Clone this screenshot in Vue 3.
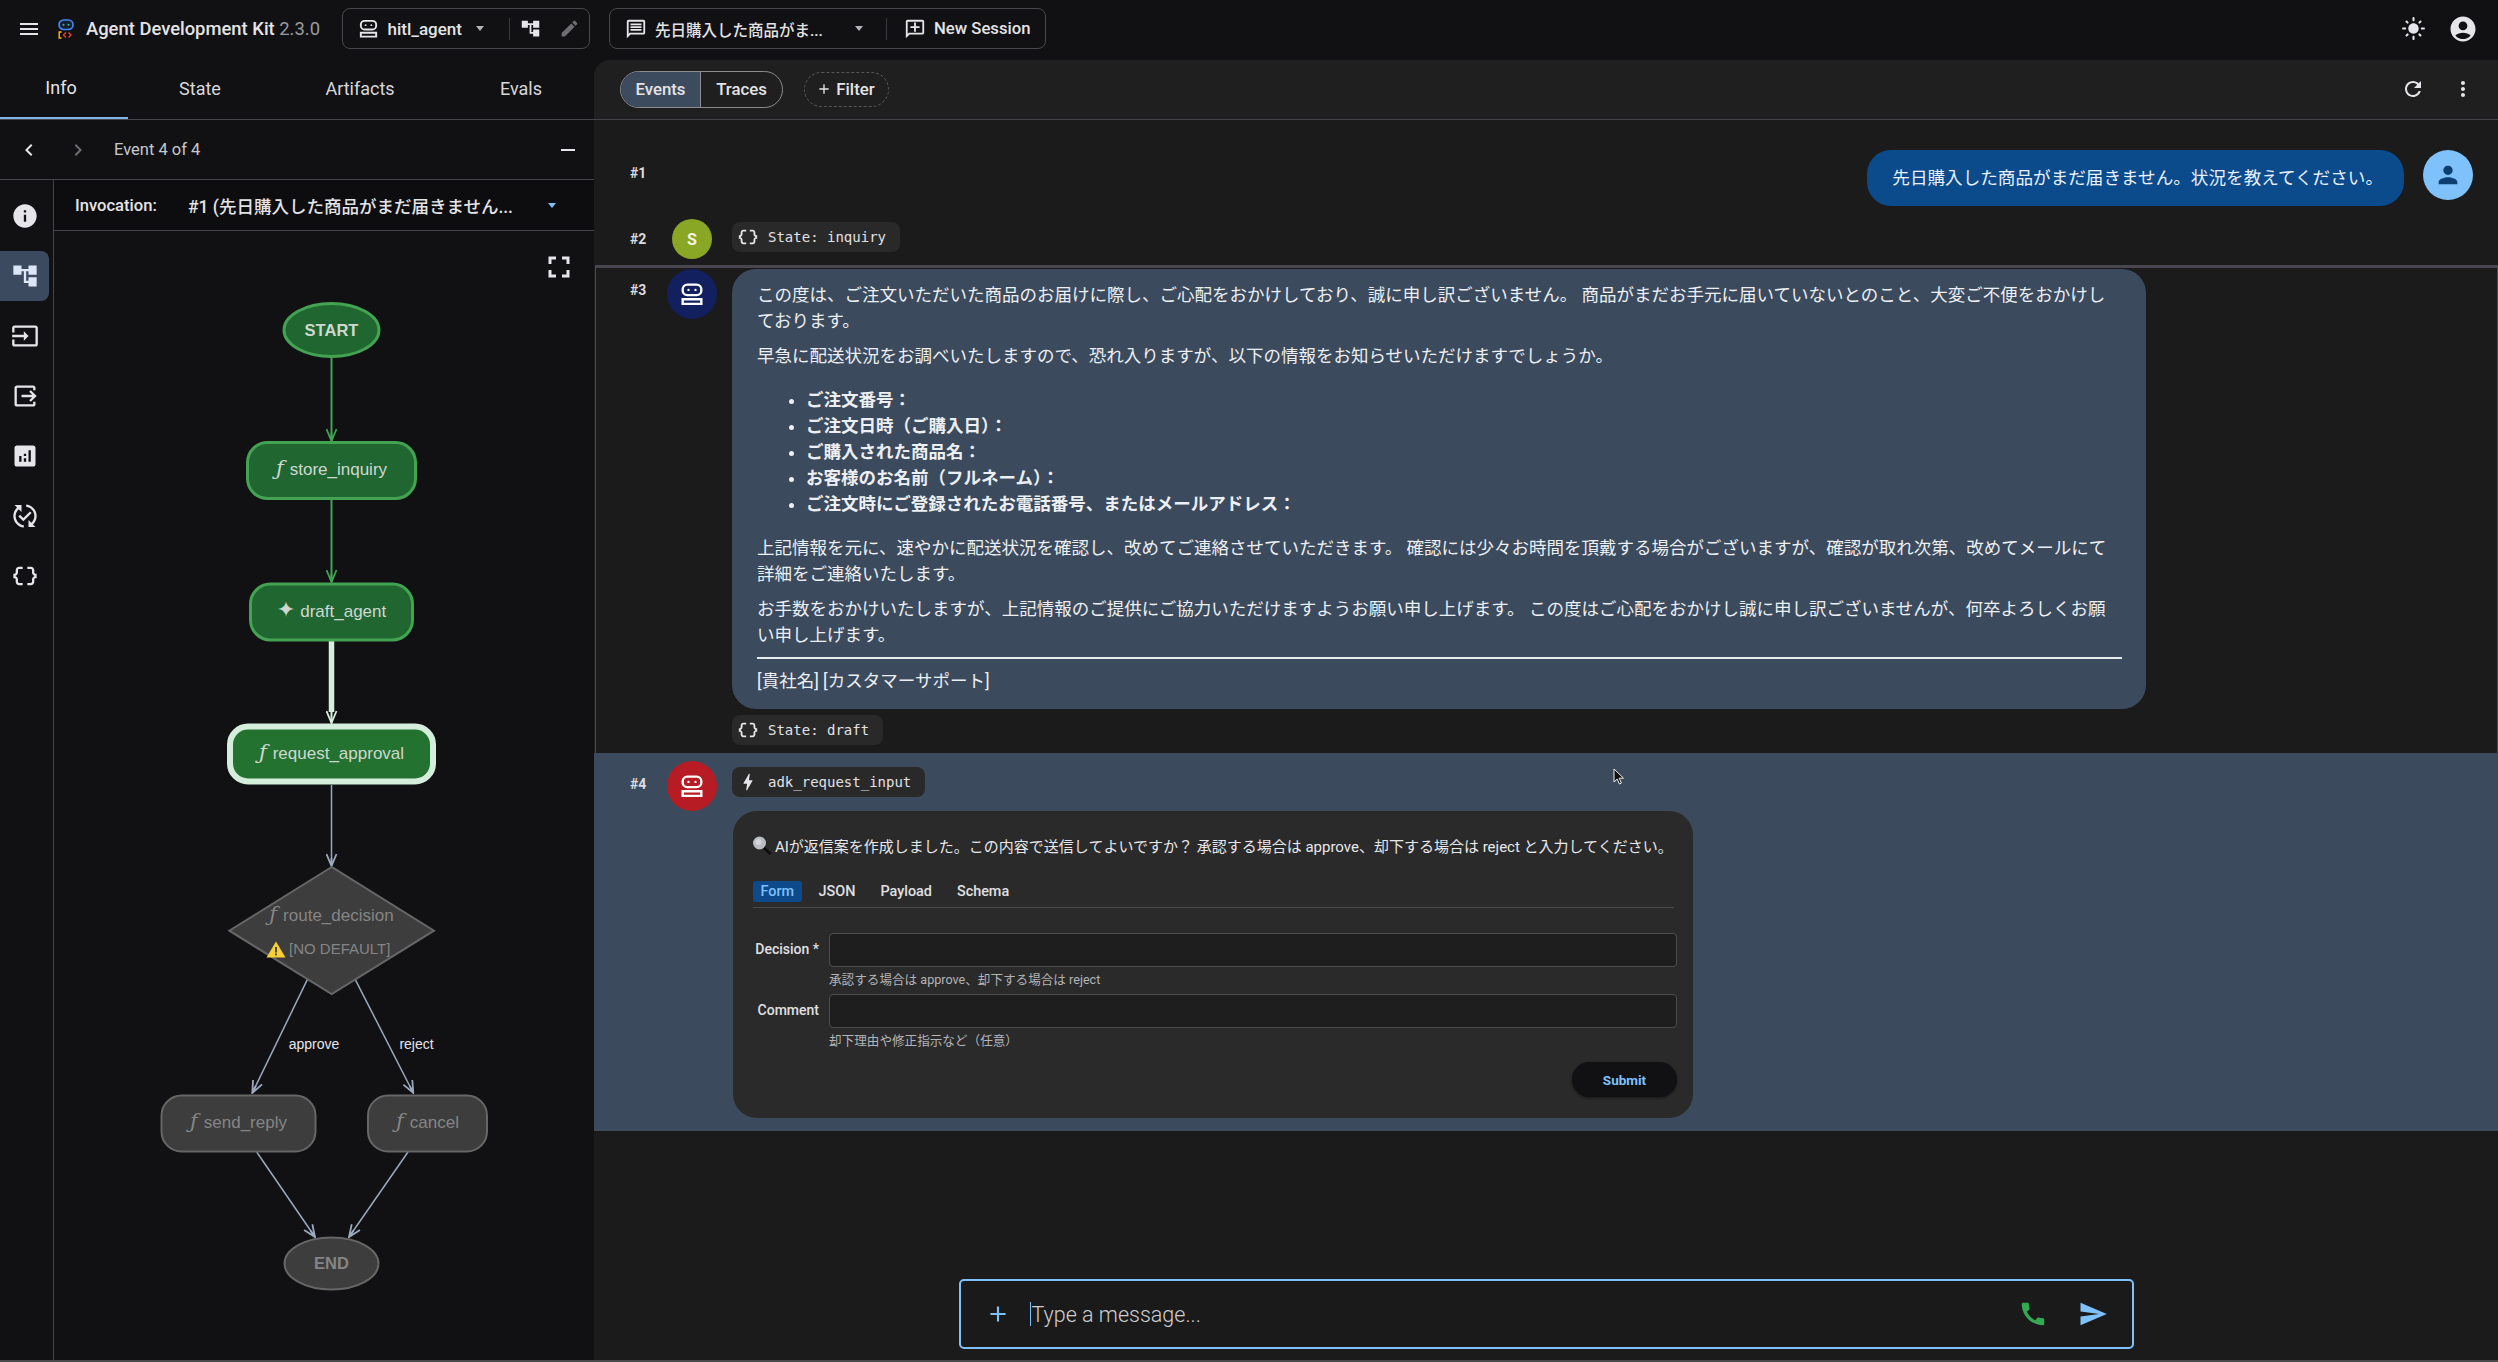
<script setup>
const icons = {
  menu: 'M3 18h18v-2H3v2zm0-5h18v-2H3v2zm0-7v2h18V6H3z',
  tree: 'M22 11V3h-7v3H9V3H2v8h7V8h2v10h4v3h7v-8h-7v3h-2V8h2v3z',
  edit: 'M3 17.25V21h3.75L17.81 9.94l-3.75-3.75L3 17.25zM20.71 7.04c.39-.39.39-1.02 0-1.41l-2.34-2.34c-.39-.39-1.02-.39-1.41 0l-1.83 1.83 3.75 3.75 1.83-1.83z',
  chat: 'M20 2H4c-1.1 0-2 .9-2 2v18l4-4h14c1.1 0 2-.9 2-2V4c0-1.1-.9-2-2-2zm0 14H5.17L4 17.17V4h16v12zM6 12h12v2H6zm0-3h12v2H6zm0-3h12v2H6z',
  chatAdd: 'M20 2H4c-1.1 0-2 .9-2 2v18l4-4h14c1.1 0 2-.9 2-2V4c0-1.1-.9-2-2-2zm0 14H5.17L4 17.17V4h16v12zM11 5h2v4h4v2h-4v4h-2v-4H7V9h4z',
  info: 'M12 2C6.48 2 2 6.48 2 12s4.48 10 10 10 10-4.48 10-10S17.52 2 12 2zm1 15h-2v-6h2v6zm0-8h-2V7h2v2z',
  input: 'M21 3.01H3c-1.1 0-2 .9-2 2V9h2V4.99h18v14.03H3V15H1v4.01c0 1.1.9 1.98 2 1.98h18c1.1 0 2-.88 2-1.98v-14c0-1.11-.9-2-2-2zM11 16l4-4-4-4v3H1v2h10v3z',
  output: 'M17 17l5-5-5-5-1.4 1.4 2.6 2.6H9v2h9.2l-2.6 2.6L17 17zM19 19H5V5h14v2h2V5c0-1.1-.9-2-2-2H5c-1.1 0-2 .9-2 2v14c0 1.1.9 2 2 2h14c1.1 0 2-.9 2-2v-2h-2v2z',
  analytics: 'M19 3H5c-1.1 0-2 .9-2 2v14c0 1.1.9 2 2 2h14c1.1 0 2-.9 2-2V5c0-1.1-.9-2-2-2zM9 17H7v-5h2v5zm4 0h-2v-3h2v3zm0-5h-2v-2h2v2zm4 5h-2V7h2v10z',
  evals: 'M17.66 9.53l-7.07 7.07-4.24-4.24 1.41-1.41 2.83 2.83 5.66-5.66 1.41 1.41zM4 12c0-2.33 1.02-4.42 2.62-5.88L9 8.5v-6H3l2.2 2.2C3.24 6.52 2 9.11 2 12c0 5.19 3.95 9.45 9 9.95v-2.02c-3.94-.49-7-3.86-7-7.93zm18 0c0-5.19-3.95-9.45-9-9.95v2.02c3.94.49 7 3.86 7 7.93 0 2.33-1.02 4.42-2.62 5.88L15 15.5v6h6l-2.2-2.2c1.96-1.82 3.2-4.41 3.2-7.3z',
  braces: 'M4 7v2c0 .55-.45 1-1 1H2v4h1c.55 0 1 .45 1 1v2c0 1.65 1.35 3 3 3h3v-2H7c-.55 0-1-.45-1-1v-2c0-1.3-.84-2.42-2-2.83v-.34C5.16 11.42 6 10.3 6 9V7c0-.55.45-1 1-1h3V4H7C5.35 4 4 5.35 4 7zM21 10c-.55 0-1-.45-1-1V7c0-1.65-1.35-3-3-3h-3v2h3c.55 0 1 .45 1 1v2c0 1.3.84 2.42 2 2.83v.34c-1.16.41-2 1.52-2 2.83v2c0 .55-.45 1-1 1h-3v2h3c1.65 0 3-1.35 3-3v-2c0-.55.45-1 1-1h1v-4h-1z',
  bolt: 'M11 21h-1l1-7H7.5c-.88 0-.33-.75-.31-.78C8.48 10.94 10.42 7.54 13 3h1l-1 7h3.5c.49 0 .56.33.47.51l-.07.15C12.96 17.55 11 21 11 21z',
  fullscreen: 'M7 14H5v5h5v-2H7v-3zm-2-4h2V7h3V5H5v5zm12 7h-3v2h5v-5h-2v3zM14 5v2h3v3h2V5h-5z',
  sun: 'M12 7c-2.76 0-5 2.24-5 5s2.24 5 5 5 5-2.24 5-5-2.24-5-5-5zM2 13h2c.55 0 1-.45 1-1s-.45-1-1-1H2c-.55 0-1 .45-1 1s.45 1 1 1zm18 0h2c.55 0 1-.45 1-1s-.45-1-1-1h-2c-.55 0-1 .45-1 1s.45 1 1 1zM11 2v2c0 .55.45 1 1 1s1-.45 1-1V2c0-.55-.45-1-1-1s-1 .45-1 1zm0 18v2c0 .55.45 1 1 1s1-.45 1-1v-2c0-.55-.45-1-1-1s-1 .45-1 1zM5.99 4.58a.996.996 0 00-1.41 0 .996.996 0 000 1.41l1.06 1.06c.39.39 1.03.39 1.41 0s.39-1.03 0-1.41L5.99 4.58zm12.37 12.37a.996.996 0 00-1.41 0 .996.996 0 000 1.41l1.06 1.06c.39.39 1.03.39 1.41 0a.996.996 0 000-1.41l-1.06-1.06zm1.06-10.96a.996.996 0 000-1.41.996.996 0 00-1.41 0l-1.06 1.06c-.39.39-.39 1.03 0 1.41s1.03.39 1.41 0l1.06-1.06zM7.05 18.36a.996.996 0 000-1.41.996.996 0 00-1.41 0l-1.06 1.06c-.39.39-.39 1.03 0 1.41s1.03.39 1.41 0l1.06-1.06z',
  account: 'M12 2C6.48 2 2 6.48 2 12s4.48 10 10 10 10-4.48 10-10S17.52 2 12 2zm0 4c1.93 0 3.5 1.57 3.5 3.5S13.93 13 12 13s-3.5-1.57-3.5-3.5S10.07 6 12 6zm0 14c-2.03 0-4.43-.82-6.14-2.88C7.55 15.8 9.68 15 12 15s4.45.8 6.14 2.12C16.43 19.18 14.03 20 12 20z',
  refresh: 'M17.65 6.35C16.2 4.9 14.21 4 12 4c-4.42 0-7.99 3.58-7.99 8s3.57 8 7.99 8c3.73 0 6.84-2.55 7.73-6h-2.08c-.82 2.33-3.04 4-5.65 4-3.31 0-6-2.69-6-6s2.69-6 6-6c1.66 0 3.14.69 4.22 1.78L13 11h7V4l-2.35 2.35z',
  more: 'M12 8c1.1 0 2-.9 2-2s-.9-2-2-2-2 .9-2 2 .9 2 2 2zm0 2c-1.1 0-2 .9-2 2s.9 2 2 2 2-.9 2-2-.9-2-2-2zm0 6c-1.1 0-2 .9-2 2s.9 2 2 2 2-.9 2-2-.9-2-2-2z',
  person: 'M12 12c2.21 0 4-1.79 4-4s-1.79-4-4-4-4 1.79-4 4 1.79 4 4 4zm0 2c-2.67 0-8 1.34-8 4v2h16v-2c0-2.66-5.33-4-8-4z',
  call: 'M20.01 15.38c-1.23 0-2.42-.2-3.53-.56a.977.977 0 00-1.01.24l-1.57 1.97c-2.83-1.35-5.48-3.9-6.89-6.83l1.95-1.66c.27-.28.35-.67.24-1.02-.37-1.11-.56-2.3-.56-3.53 0-.54-.45-.99-.99-.99H4.19C3.65 3 3 3.24 3 3.99 3 13.28 10.73 21 20.01 21c.71 0 .99-.63.99-1.18v-3.45c0-.54-.45-.99-.99-.99z',
  send: 'M2.01 21L23 12 2.01 3 2 10l15 2-15 2z',
  add: 'M19 13h-6v6h-2v-6H5v-2h6V5h2v6h6v2z',
  prev: 'M15.41 7.41L14 6l-6 6 6 6 1.41-1.41L10.83 12z',
  next: 'M10 6L8.59 7.41 13.17 12l-4.58 4.58L10 18l6-6z',
  remove: 'M19 13H5v-2h14v2z',
  // the little agent glyph used in the picker and on avatars
  robot: 'M8 3h8a5 5 0 015 5v1a5 5 0 01-5 5H8a5 5 0 01-5-5V8a5 5 0 015-5zM8 5a3 3 0 00-3 3v1a3 3 0 003 3h8a3 3 0 003-3V8a3 3 0 00-3-3H8zM9 7.500a1 1 0 110 2 1 1 0 010-2zM15 7.500a1 1 0 110 2 1 1 0 010-2zM3 15.500h18v6H3zM5 17.500v2h14v-2H5z',
}

const rail = [
  { icon: 'info' },
  { icon: 'tree', active: true },
  { icon: 'input' },
  { icon: 'output' },
  { icon: 'analytics' },
  { icon: 'evals' },
  { icon: 'braces' },
]

const tabs = ['Info', 'State', 'Artifacts', 'Evals']
const orderFields = ['ご注文番号：', 'ご注文日時（ご購入日）：', 'ご購入された商品名：', 'お客様のお名前（フルネーム）：', 'ご注文時にご登録されたお電話番号、またはメールアドレス：']
const formTabs = ['Form', 'JSON', 'Payload', 'Schema']
const fields = [
  { label: 'Decision *', hint: '承認する場合は approve、却下する場合は reject' },
  { label: 'Comment', hint: '却下理由や修正指示など（任意）' },
]
</script>

<template>
  <div class="app">
    <header class="topbar">
      <svg class="ico menu" viewBox="0 0 24 24"><path :d="icons.menu" /></svg>
      <svg class="logo" viewBox="0 0 16 20">
        <rect x="1" y="1" width="14" height="9.500" rx="4.700" fill="#12202c" stroke="#4285f4" stroke-width="1.700" />
        <circle cx="5.500" cy="5.700" r="1" fill="#3fb7a0" />
        <circle cx="10.500" cy="5.700" r="1" fill="#3fb7a0" />
        <path d="M3.500 13H1.200v6h2.300" fill="none" stroke="#fbbc04" stroke-width="1.400" />
        <path d="M8 13.500L5.500 16L8 18.500M10.500 13.500L13 16L10.500 18.500" fill="none" stroke="#ea4335" stroke-width="1.400" />
      </svg>
      <div class="title">Agent Development Kit <span>2.3.0</span></div>
      <div class="box agent-box">
        <svg class="ico s23" viewBox="0 0 24 24"><path :d="icons.robot" /></svg>
        <span class="box-text">hitl_agent</span>
        <i class="caret"></i>
        <b class="sep"></b>
        <svg class="ico s21" viewBox="0 0 24 24"><path :d="icons.tree" /></svg>
        <svg class="ico s21 dim pen" viewBox="0 0 24 24"><path :d="icons.edit" /></svg>
      </div>
      <div class="box session-box">
        <svg class="ico s22" viewBox="0 0 24 24"><path :d="icons.chat" /></svg>
        <span class="box-text session-name">先日購入した商品がま...</span>
        <i class="caret"></i>
        <b class="sep"></b>
        <svg class="ico s22" viewBox="0 0 24 24"><path :d="icons.chatAdd" /></svg>
        <span class="box-text new">New Session</span>
      </div>
      <div class="top-right">
        <svg class="ico sun" viewBox="0 0 24 24"><path :d="icons.sun" /></svg>
        <svg class="ico acct" viewBox="0 0 24 24"><path :d="icons.account" /></svg>
      </div>
    </header>

    <div class="body">
      <aside class="side">
        <nav class="tabs">
          <div v-for="(t, i) in tabs" :key="t" class="tab" :class="'tab' + i">{{ t }}</div>
        </nav>
        <div class="event-nav">
          <svg class="ico" viewBox="0 0 24 24"><path :d="icons.prev" /></svg>
          <svg class="ico dim nav-next" viewBox="0 0 24 24"><path :d="icons.next" /></svg>
          <span class="event-count">Event 4 of 4</span>
          <svg class="ico nav-min" viewBox="0 0 24 24"><path :d="icons.remove" /></svg>
        </div>
        <div class="side-body">
          <div class="rail">
            <div v-for="r in rail" :key="r.icon" class="rail-item" :class="{ active: r.active }">
              <svg class="ico rail-ico" viewBox="0 0 24 24"><path :d="icons[r.icon]" /></svg>
            </div>
          </div>
          <div class="graph-col">
            <div class="invocation">
              <span class="inv-label">Invocation:</span>
              <span class="inv-value">#1 (先日購入した商品がまだ届きません...</span>
              <i class="caret blue"></i>
            </div>
            <div class="canvas">
              <svg class="ico full" viewBox="0 0 24 24"><path :d="icons.fullscreen" /></svg>
              <svg class="graph" viewBox="54 231 540 1129" width="540" height="1129">
                <defs>
                  <marker id="ag" markerUnits="userSpaceOnUse" viewBox="0 0 14 12" markerWidth="14" markerHeight="12" refX="13" refY="6" orient="auto"><path d="M1 1L13 6L1 11M13 6L5 6" fill="none" stroke="#43a352" stroke-width="1.800" /></marker>
                  <marker id="aw" markerUnits="userSpaceOnUse" viewBox="0 0 14 12" markerWidth="14" markerHeight="12" refX="13" refY="6" orient="auto"><path d="M1 1L13 6L1 11" fill="none" stroke="#d6eedd" stroke-width="1.800" /></marker>
                  <marker id="ax" markerUnits="userSpaceOnUse" viewBox="0 0 14 12" markerWidth="14" markerHeight="12" refX="13" refY="6" orient="auto"><path d="M1 1L13 6L1 11M13 6L5 6" fill="none" stroke="#9aa9bc" stroke-width="1.800" /></marker>
                </defs>

                <line x1="331.500" y1="357" x2="331.500" y2="441" class="edge-on" marker-end="url(#ag)" />
                <line x1="331.500" y1="499" x2="331.500" y2="582" class="edge-on" marker-end="url(#ag)" />
                <line x1="331.500" y1="641" x2="331.500" y2="712" class="edge-hot" />
                <line x1="331.500" y1="708" x2="331.500" y2="723" class="edge-thin" marker-end="url(#aw)" />
                <line x1="331.500" y1="785" x2="331.500" y2="866" class="edge" marker-end="url(#ax)" />
                <line x1="307.300" y1="979.600" x2="252.300" y2="1093" class="edge" marker-end="url(#ax)" />
                <line x1="355.300" y1="979.600" x2="413.300" y2="1093" class="edge" marker-end="url(#ax)" />
                <line x1="256.700" y1="1152" x2="315" y2="1237" class="edge" marker-end="url(#ax)" />
                <line x1="408" y1="1152" x2="349" y2="1237" class="edge" marker-end="url(#ax)" />

                <ellipse cx="331.500" cy="330" rx="47.500" ry="26.500" class="n-on" />
                <text x="331.500" y="336" class="t-on t-bold">START</text>

                <rect x="247.500" y="442.500" width="168" height="56" rx="20" class="n-on" />
                <text x="331.500" y="475" class="t-on"><tspan class="fn">ƒ</tspan><tspan dx="6">store_inquiry</tspan></text>

                <rect x="250.500" y="584" width="162" height="56" rx="20" class="n-on" />
                <text x="331.500" y="617" class="t-on"><tspan class="spark">✦</tspan><tspan dx="5">draft_agent</tspan></text>

                <rect x="230" y="726.500" width="203" height="55" rx="18" class="n-hot" />
                <text x="331.500" y="759" class="t-on"><tspan class="fn">ƒ</tspan><tspan dx="6">request_approval</tspan></text>

                <polygon points="331.700,867 229.300,930.700 331.700,994 434,930.700" class="n-off" />
                <text x="331.500" y="921" class="t-off"><tspan class="fn">ƒ</tspan><tspan dx="6">route_decision</tspan></text>
                <g>
                  <path d="M276 941.500L285.500 957.500H266.500Z" fill="#f8cf37" />
                  <rect x="275.100" y="947" width="1.800" height="5.500" fill="#3a3a3a" />
                  <rect x="275.100" y="953.500" width="1.800" height="1.800" fill="#3a3a3a" />
                </g>
                <text x="289" y="954" class="t-off t-small t-start">[NO DEFAULT]</text>

                <text x="314" y="1049" class="t-label">approve</text>
                <text x="416.500" y="1049" class="t-label">reject</text>

                <rect x="161.500" y="1095.500" width="154" height="56" rx="20" class="n-off" />
                <text x="238.500" y="1128" class="t-off"><tspan class="fn">ƒ</tspan><tspan dx="6">send_reply</tspan></text>

                <rect x="368" y="1095.500" width="119" height="56" rx="20" class="n-off" />
                <text x="427.500" y="1128" class="t-off"><tspan class="fn">ƒ</tspan><tspan dx="6">cancel</tspan></text>

                <ellipse cx="331.500" cy="1263.500" rx="47" ry="26" class="n-off" />
                <text x="331.500" y="1269" class="t-off t-bold">END</text>
              </svg>
            </div>
          </div>
        </div>
      </aside>

      <main class="main">
        <div class="toolbar">
          <div class="toggle">
            <span class="toggle-on">Events</span>
            <span class="toggle-off">Traces</span>
          </div>
          <div class="filter"><svg class="ico s16" viewBox="0 0 24 24"><path :d="icons.add" /></svg>Filter</div>
          <div class="toolbar-right">
            <svg class="ico" viewBox="0 0 24 24"><path :d="icons.refresh" /></svg>
            <svg class="ico" viewBox="0 0 24 24"><path :d="icons.more" /></svg>
          </div>
        </div>

        <div class="list">
          <div class="row row1">
            <div class="num">#1</div>
            <div class="user-bubble">先日購入した商品がまだ届きません。状況を教えてください。</div>
            <div class="avatar user"><svg viewBox="0 0 24 24"><path :d="icons.person" /></svg></div>
          </div>

          <div class="row row2">
            <div class="num">#2</div>
            <div class="avatar-slot"><div class="avatar state">S</div></div>
            <div class="chip">
              <svg class="ico s22" viewBox="0 0 24 24"><path :d="icons.braces" /></svg>State: inquiry
            </div>
          </div>

          <div class="row row3">
            <div class="num">#3</div>
            <div class="avatar agent"><svg viewBox="0 0 24 24"><path :d="icons.robot" /></svg></div>
            <div class="content">
              <div class="bubble">
                <p>この度は、ご注文いただいた商品のお届けに際し、ご心配をおかけしており、誠に申し訳ございません。 商品がまだお手元に届いていないとのこと、大変ご不便をおかけしております。</p>
                <p>早急に配送状況をお調べいたしますので、恐れ入りますが、以下の情報をお知らせいただけますでしょうか。</p>
                <ul>
                  <li v-for="f in orderFields" :key="f">{{ f }}</li>
                </ul>
                <p>上記情報を元に、速やかに配送状況を確認し、改めてご連絡させていただきます。 確認には少々お時間を頂戴する場合がございますが、確認が取れ次第、改めてメールにて詳細をご連絡いたします。</p>
                <p>お手数をおかけいたしますが、上記情報のご提供にご協力いただけますようお願い申し上げます。 この度はご心配をおかけし誠に申し訳ございませんが、何卒よろしくお願い申し上げます。</p>
                <hr />
                <p class="sign">[貴社名] [カスタマーサポート]</p>
              </div>
              <div class="chip">
                <svg class="ico s22" viewBox="0 0 24 24"><path :d="icons.braces" /></svg>State: draft
              </div>
            </div>
          </div>

          <div class="row row4">
            <div class="num">#4</div>
            <div class="avatar alert"><svg viewBox="0 0 24 24"><path :d="icons.robot" /></svg></div>
            <div class="content">
              <div class="chip">
                <svg class="ico s22" viewBox="0 0 24 24"><path :d="icons.bolt" /></svg>adk_request_input
              </div>
              <div class="card">
                <div class="prompt">
                  <svg class="lens" viewBox="0 0 19 19">
                    <path d="M10.500 11.500L17.500 18" stroke="#0c0c0c" stroke-width="2.600" />
                    <circle cx="6.500" cy="7" r="6.500" fill="#b9bcc0" />
                    <circle cx="5.500" cy="6" r="3" fill="#d4d6d9" />
                  </svg>
                  <span>AIが返信案を作成しました。この内容で送信してよいですか？ 承認する場合は approve、却下する場合は reject と入力してください。</span>
                </div>
                <div class="form-tabs">
                  <span v-for="(t, i) in formTabs" :key="t" :class="{ on: i === 0 }">{{ t }}</span>
                </div>
                <div v-for="f in fields" :key="f.label" class="field">
                  <label>{{ f.label }}</label>
                  <div class="input"></div>
                  <div class="hint">{{ f.hint }}</div>
                </div>
                <div class="submit-row"><div class="submit">Submit</div></div>
              </div>
            </div>
          </div>

          <svg class="cursor" viewBox="0 0 12 18"><path d="M1 1v13l3.200-3 2.200 5 2-.9-2.200-4.900H10.500z" fill="#111" stroke="#eee" stroke-width="1" /></svg>
        </div>

        <div class="footer">
          <div class="composer">
            <svg class="ico plus" viewBox="0 0 24 24"><path :d="icons.add" /></svg>
            <span class="caret-line"></span>
            <span class="placeholder">Type a message...</span>
            <svg class="ico phone" viewBox="0 0 24 24"><path :d="icons.call" /></svg>
            <svg class="ico sendi" viewBox="0 0 24 24"><path :d="icons.send" /></svg>
          </div>
        </div>
      </main>
    </div>
  </div>
</template>

<style>
html, body { margin: 0; background: #111113; }
</style>

<style scoped>
.app {
  height: 100vh;
  box-sizing: border-box;
  border-bottom: 2px solid #4a4a4c;
  display: flex;
  flex-direction: column;
  overflow: hidden;
  background: #111113;
  color: #e4e4e6;
  font-family: Roboto, "Noto Sans CJK JP", sans-serif;
}
.ico { width: 24px; height: 24px; fill: #e6e6ea; flex: none; display: block; }
.s23 { width: 23px; height: 23px; }
.s22 { width: 22px; height: 22px; }
.s21 { width: 21px; height: 21px; }
.s16 { width: 16px; height: 16px; }
.dim { fill: #6d6d72; }

/* top bar */
.topbar {
  height: 60px;
  box-sizing: border-box;
  padding: 0 20px 3px 17px;
  display: flex;
  align-items: center;
  flex: none;
}
.logo { width: 16px; height: 20px; margin-left: 17px; flex: none; }
.title { margin-left: 12px; width: 256px; font-size: 18.400px; font-weight: 500; white-space: nowrap; }
.title span { color: #9a9aa0; font-weight: 400; }
.box {
  height: 41px;
  box-sizing: border-box;
  border: 1px solid #48484c;
  border-radius: 8px;
  display: flex;
  align-items: center;
  font-size: 17px;
  font-weight: 500;
  flex: none;
}
.agent-box { width: 248px; padding-left: 13.500px; }
.session-box { width: 437px; padding-left: 15px; margin-left: 19px; }
.box-text { margin-left: 8px; white-space: nowrap; }
.caret { width: 0; height: 0; border: 4px solid transparent; border-top: 5px solid #b4b4b8; border-bottom: 0; flex: none; }
.agent-box .caret { margin-left: 14px; }
.agent-box .sep { margin-left: 25px; }
.agent-box .sep + svg { margin-left: 10.500px; }
.pen { margin-left: 18px; }
.session-name { width: 175px; overflow: hidden; font-size: 15.500px; }
.session-box .caret { margin-left: 25px; }
.session-box .sep { margin-left: 23px; }
.session-box .sep + svg { margin-left: 17px; }
.sep { width: 1px; height: 22px; background: #3a3a3e; flex: none; }
.new { margin-left: 8px; font-size: 16.700px; }
.top-right { margin-left: auto; display: flex; align-items: center; gap: 22.500px; }
.sun { width: 25px; height: 25px; }
.acct { width: 30px; height: 30px; }

.body { flex: 1; display: flex; min-height: 0; }

/* side panel */
.side { width: 594px; flex: none; display: flex; flex-direction: column; }
.tabs { height: 60px; box-sizing: border-box; border-bottom: 1px solid #44444a; display: flex; flex: none; }
.tab { display: flex; align-items: center; justify-content: center; font-size: 18px; color: #d8d8dc; height: 59px; box-sizing: border-box; padding-bottom: 3px; }
.tab0 { width: 128px; padding-right: 6px; border-bottom: 2px solid #7fb2e5; color: #e4e4e8; }
.tab1 { width: 144px; }
.tab2 { width: 176px; }
.tab3 { width: 146px; }
.event-nav { height: 60px; box-sizing: border-box; border-bottom: 1px solid #44444a; display: flex; align-items: center; padding: 0 14px 0 17px; flex: none; }
.nav-next { margin-left: 25px; }
.event-count { margin-left: 24px; font-size: 16.500px; color: #c8c8cc; }
.nav-min { margin-left: auto; }
.side-body { flex: 1; display: flex; min-height: 0; }
.rail { width: 54px; box-sizing: border-box; border-right: 1px solid #44444a; padding-top: 11px; flex: none; }
.rail-item { width: 49px; height: 50px; margin-bottom: 10px; border-radius: 0 8px 8px 0; display: flex; align-items: center; justify-content: center; }
.rail-item.active { background: #3b4a5f; }
.rail-item.active .ico { fill: #dbe6f7; }
.rail-ico { width: 28px; height: 28px; }
.graph-col { flex: 1; display: flex; flex-direction: column; min-width: 0; }
.invocation { height: 51px; box-sizing: border-box; border-bottom: 1px solid #44444a; background: #0d0d10; display: flex; align-items: center; padding-left: 21px; flex: none; font-size: 16.600px; }
.inv-label { width: 113px; font-weight: 500; }
.inv-value { width: 360px; white-space: nowrap; overflow: hidden; font-weight: 500; font-size: 17.500px; }
.caret.blue { border-top-color: #7fc1fb; }
.canvas { flex: 1; position: relative; min-height: 0; }
.full { position: absolute; left: 486.500px; top: 18px; width: 36px; height: 36px; }
.graph { display: block; font-family: "Liberation Sans", sans-serif; }
.edge-on { stroke: #43a352; stroke-width: 2; }
.edge-hot { stroke: #d6eedd; stroke-width: 5.500; }
.edge-thin { stroke: #d6eedd; stroke-width: 2; }
.edge { stroke: #9aa9bc; stroke-width: 1.500; }
.n-on { fill: #1f6630; stroke: #43a352; stroke-width: 3; }
.n-hot { fill: #24722f; stroke: #d4eedb; stroke-width: 6; }
.n-off { fill: #3d3d3d; stroke: #666; stroke-width: 2; }
text { text-anchor: middle; font-size: 17px; }
.t-on { fill: #cfd8d0; }
.t-off { fill: #858585; }
.t-bold { font-weight: 700; font-size: 16.500px; }
.t-small { font-size: 15px; }
.t-start { text-anchor: start; }
.t-label { fill: #e4e6ea; font-size: 14px; }
.fn { font-family: "DejaVu Serif", serif; font-style: italic; font-size: 21px; }
.spark { font-family: "DejaVu Sans", sans-serif; font-size: 22px; }

/* main column */
.main {
  flex: 1;
  min-width: 0;
  display: flex;
  flex-direction: column;
  background: #1b1b1c;
  border-top-left-radius: 16px;
}
.toolbar {
  height: 60px;
  box-sizing: border-box;
  flex: none;
  background: #1f1f20;
  border-bottom: 1px solid #44444a;
  border-top-left-radius: 16px;
  display: flex;
  align-items: center;
  padding: 0 23px 1px 26px;
  font-size: 16.800px;
  font-weight: 500;
}
.toggle { height: 37px; box-sizing: border-box; border: 1px solid #8b8b90; border-radius: 19px; display: flex; overflow: hidden; }
.toggle span { display: flex; align-items: center; justify-content: center; }
.toggle-on { width: 79px; background: #3d4b5f; border-right: 1px solid #8b8b90; }
.toggle-off { width: 81px; }
.filter { margin-left: 21px; width: 85px; height: 35px; box-sizing: border-box; border: 1px dashed #55555a; border-radius: 18px; display: flex; align-items: center; justify-content: center; gap: 4px; padding-right: 2px; }
.toolbar-right { margin-left: auto; display: flex; gap: 26px; }

.list { flex: 1; min-height: 0; position: relative; }
.row { display: flex; align-items: flex-start; padding-left: 36px; box-sizing: border-box; }
.num { width: 37px; flex: none; font-size: 14px; font-weight: 700; line-height: 16px; color: #dcdcdf; }
.row1 { margin-top: 30px; padding-right: 25px; height: 56px; }
.row1 .num { margin-top: 15px; margin-right: auto; }
.row2 { margin-top: 13px; height: 40px; }
.row2 .num { margin-top: 12px; }
.row3 {
  margin-top: 6px;
  margin-left: 1px;
  padding: 1px 0 8px 34px;
  border: 1px solid #4c4c50;
  border-top: 3px solid #4a4650;
  border-bottom: 0;
  height: 488px;
}
.row3 .num { margin-top: 13px; }
.row4 { height: 378px; background: #3b4a5c; padding-top: 8px; padding-bottom: 13px; }
.row4 .num { margin-top: 15px; }
.avatar { width: 50px; height: 50px; border-radius: 50%; display: flex; align-items: center; justify-content: center; flex: none; }
.avatar svg { width: 28px; height: 28px; fill: #fff; }
.avatar-slot { width: 50px; flex: none; display: flex; justify-content: center; }
.avatar.user { background: #7fc1fb; margin-left: 19px; }
.avatar.user svg { fill: #0b3f72; }
.avatar.state { width: 40px; height: 40px; background: #8aa625; font-size: 16px; font-weight: 700; color: #f2f5e6; }
.avatar.agent { background: #12205f; }
.avatar.alert { background: #b71c24; }
.user-bubble { background: #0b4a8b; border-radius: 24px; height: 56px; box-sizing: border-box; padding: 15px 21px 15px 25px; font-size: 17.600px; line-height: 26px; white-space: nowrap; color: #e8f1fb; }
.content { margin-left: 15px; display: flex; flex-direction: column; align-items: flex-start; }
.row4 .content { margin-top: 6px; }
.chip {
  height: 30px;
  box-sizing: border-box;
  background: #29292a;
  border-radius: 8px;
  display: inline-flex;
  align-items: center;
  gap: 9px;
  padding: 0 14px 0 5px;
  font-family: "DejaVu Sans Mono", monospace;
  font-size: 14px;
  color: #e2e2e4;
  white-space: nowrap;
}
.row2 .chip { margin: 3px 0 0 15px; }
.row3 .chip { margin-top: 6px; }
.bubble {
  width: 1414px;
  box-sizing: border-box;
  background: #3b4a5c;
  border-radius: 24px;
  padding: 13px 26px 15px 25px;
  font-size: 17.500px;
  line-height: 26px;
  color: #eceff3;
}
.bubble p { margin: 0 0 9px; }
.bubble ul { margin: 18px 0 18px; padding-left: 49px; font-weight: 700; }
.bubble hr { border: 0; border-top: 2px solid #e8ebef; margin: 9px -2px 9px 0; }
.bubble .sign { margin: 0; }
.card {
  margin: 14px 0 0 1px;
  width: 960px;
  height: 307px;
  box-sizing: border-box;
  background: #2a2a2b;
  border-radius: 24px;
  padding: 22px 16px 20px 20px;
}
.prompt { display: flex; align-items: center; height: 24px; font-size: 15px; color: #e8e8ea; white-space: nowrap; }
.lens { width: 19px; height: 19px; margin-right: 3px; flex: none; }
.form-tabs {
  margin-top: 24px;
  height: 26px;
  border-bottom: 1px solid #4a4a4c;
  font-size: 14.400px;
  font-weight: 500;
  display: flex;
  align-items: flex-start;
  margin-right: 3px;
  gap: 9px;
}
.form-tabs span { height: 21px; line-height: 21px; padding: 0 8px; border-radius: 3px; color: #e0e0e2; }
.form-tabs .on { background: #0c4a8c; color: #7fc1fb; padding: 0 7.500px; }
.field { display: grid; grid-template-columns: 66px 848px; column-gap: 10px; margin-bottom: 6px; font-size: 14px; }
.form-tabs + .field { margin-top: 25px; }
.field label { font-weight: 500; text-align: right; line-height: 32px; white-space: nowrap; color: #e0e0e2; }
.input { height: 34px; box-sizing: border-box; background: #1e1e1f; border: 1px solid #4d4d4f; border-radius: 4px; }
.hint { grid-column: 2; margin-top: 5px; height: 16px; line-height: 16px; font-size: 12.600px; color: #b4b4b6; white-space: nowrap; }
.submit-row { margin-top: 13px; display: flex; justify-content: flex-end; }
.submit { width: 105px; height: 35px; border-radius: 18px; background: #111113; color: #7fc1fb; font-size: 13.500px; font-weight: 700; display: flex; align-items: center; justify-content: center; box-shadow: 0 1px 3px rgba(0, 0, 0, .5); }
.cursor { position: absolute; left: 1019px; top: 648px; width: 12px; height: 18px; }

/* composer */
.footer { flex: none; display: flex; justify-content: center; padding-bottom: 11px; }
.composer {
  width: 1175px;
  height: 70px;
  box-sizing: border-box;
  border: 2px solid #7fc1fb;
  border-radius: 5px;
  background: #1a1a1b;
  display: flex;
  align-items: center;
  padding: 0 24px 0 24px;
  font-size: 21.500px;
}
.plus { fill: #7fc1fb; width: 26px; height: 26px; }
.caret-line { width: 1px; height: 24px; background: #7fc1fb; margin-left: 19px; }
.placeholder { color: #cfcfd2; font-weight: 300; margin-left: 1px; }
.phone { fill: #34a853; margin-left: auto; width: 30px; height: 30px; }
.sendi { fill: #7fc1fb; margin-left: 30px; width: 30px; height: 30px; }
</style>
